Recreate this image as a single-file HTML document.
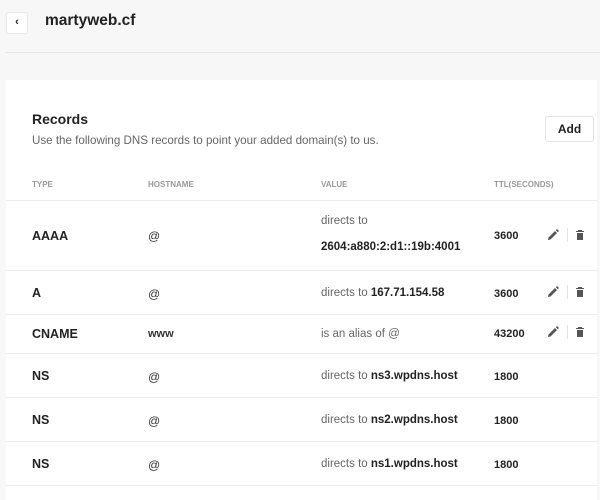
<!DOCTYPE html>
<html><head><style>
*{margin:0;padding:0;box-sizing:border-box}
body{width:600px;height:487px;background:#f7f7f7;font-family:"Liberation Sans",sans-serif;position:relative;overflow:hidden;color:#222}
.abs{position:absolute}
.back{left:6px;top:12px;width:22px;height:22px;background:#fff;border:1px solid #e8e8e8;border-radius:3px;font-size:11px;font-weight:bold;text-align:center;line-height:19px}
.title{left:45px;top:12px;font-size:15.5px;font-weight:bold;color:#222}
.hr{left:6px;top:52px;width:594px;height:1px;background:#e6e6e6}
.card{left:6px;top:80px;width:591px;height:420px;background:#fff}
.h{font-size:14px;font-weight:bold;left:32px;top:111px}
.sub{font-size:11.6px;color:#666;left:32px;top:134px}
.add{left:545px;top:116px;width:49px;height:26px;border:1px solid #e3e3e3;border-radius:3px;font-size:12px;font-weight:bold;text-align:center;line-height:24px}
.th{font-size:8px;font-weight:bold;color:#999;top:180px}
.line{left:6px;width:591px;height:1px;background:#ececec}
.t{font-size:12.5px;font-weight:bold}
.hn{font-size:12px;color:#333}
.v{font-size:11.5px;color:#666}
.v b{color:#222}
.ttl{font-size:11px;font-weight:bold}
</style></head><body>
<div class="abs back">‹</div>
<div class="abs title">martyweb.cf</div>
<div class="abs hr"></div>
<div class="abs card"></div>
<div class="abs h">Records</div>
<div class="abs sub">Use the following DNS records to point your added domain(s) to us.</div>
<div class="abs add">Add</div>
<div class="abs th" style="left:32px">TYPE</div>
<div class="abs th" style="left:148px">HOSTNAME</div>
<div class="abs th" style="left:321px">VALUE</div>
<div class="abs th" style="left:494px">TTL(SECONDS)</div>
<div class="abs line" style="top:200px"></div>
<div class="abs line" style="top:270px"></div>
<div class="abs line" style="top:314px"></div>
<div class="abs line" style="top:353px"></div>
<div class="abs line" style="top:397px"></div>
<div class="abs line" style="top:441px"></div>
<div class="abs line" style="top:485px"></div>

<div class="abs t" style="left:32px;top:229px">AAAA</div>
<div class="abs hn" style="left:148px;top:229px">@</div>
<div class="abs v" style="left:321px;top:215px">directs to</div>
<div class="abs v" style="left:321px;top:241px"><b>2604:a880:2:d1::19b:4001</b></div>
<div class="abs ttl" style="left:494px;top:230px">3600</div>

<div class="abs t" style="left:32px;top:286px">A</div>
<div class="abs hn" style="left:148px;top:287px">@</div>
<div class="abs v" style="left:321px;top:287px">directs to <b>167.71.154.58</b></div>
<div class="abs ttl" style="left:494px;top:288px">3600</div>

<div class="abs t" style="left:32px;top:327px">CNAME</div>
<div class="abs hn" style="left:148px;top:328px;font-weight:bold;font-size:11px">www</div>
<div class="abs v" style="left:321px;top:328px">is an alias of @</div>
<div class="abs ttl" style="left:494px;top:328px">43200</div>

<div class="abs t" style="left:32px;top:369px">NS</div>
<div class="abs hn" style="left:148px;top:370px">@</div>
<div class="abs v" style="left:321px;top:370px">directs to <b>ns3.wpdns.host</b></div>
<div class="abs ttl" style="left:494px;top:371px">1800</div>

<div class="abs t" style="left:32px;top:413px">NS</div>
<div class="abs hn" style="left:148px;top:414px">@</div>
<div class="abs v" style="left:321px;top:414px">directs to <b>ns2.wpdns.host</b></div>
<div class="abs ttl" style="left:494px;top:415px">1800</div>

<div class="abs t" style="left:32px;top:457px">NS</div>
<div class="abs hn" style="left:148px;top:458px">@</div>
<div class="abs v" style="left:321px;top:458px">directs to <b>ns1.wpdns.host</b></div>
<div class="abs ttl" style="left:494px;top:459px">1800</div>

<svg class="abs" style="left:546px;top:228px" width="40" height="14"><path d="M2 12 L2.5 9.5 L9 3 L11 5 L4.5 11.5 Z M9.8 2.2 L11 1 L13 3 L11.8 4.2Z" fill="#555"/><rect x="21" y="0" width="1" height="14" fill="#e3e3e3"/><path d="M30 3h8v1h-8z M32 2h4v1h-4z M31 5h6v7h-6z" fill="#555"/></svg>
<svg class="abs" style="left:546px;top:285px" width="40" height="14"><path d="M2 12 L2.5 9.5 L9 3 L11 5 L4.5 11.5 Z M9.8 2.2 L11 1 L13 3 L11.8 4.2Z" fill="#555"/><rect x="21" y="0" width="1" height="14" fill="#e3e3e3"/><path d="M30 3h8v1h-8z M32 2h4v1h-4z M31 5h6v7h-6z" fill="#555"/></svg>
<svg class="abs" style="left:546px;top:325px" width="40" height="14"><path d="M2 12 L2.5 9.5 L9 3 L11 5 L4.5 11.5 Z M9.8 2.2 L11 1 L13 3 L11.8 4.2Z" fill="#555"/><rect x="21" y="0" width="1" height="14" fill="#e3e3e3"/><path d="M30 3h8v1h-8z M32 2h4v1h-4z M31 5h6v7h-6z" fill="#555"/></svg>
</body></html>
